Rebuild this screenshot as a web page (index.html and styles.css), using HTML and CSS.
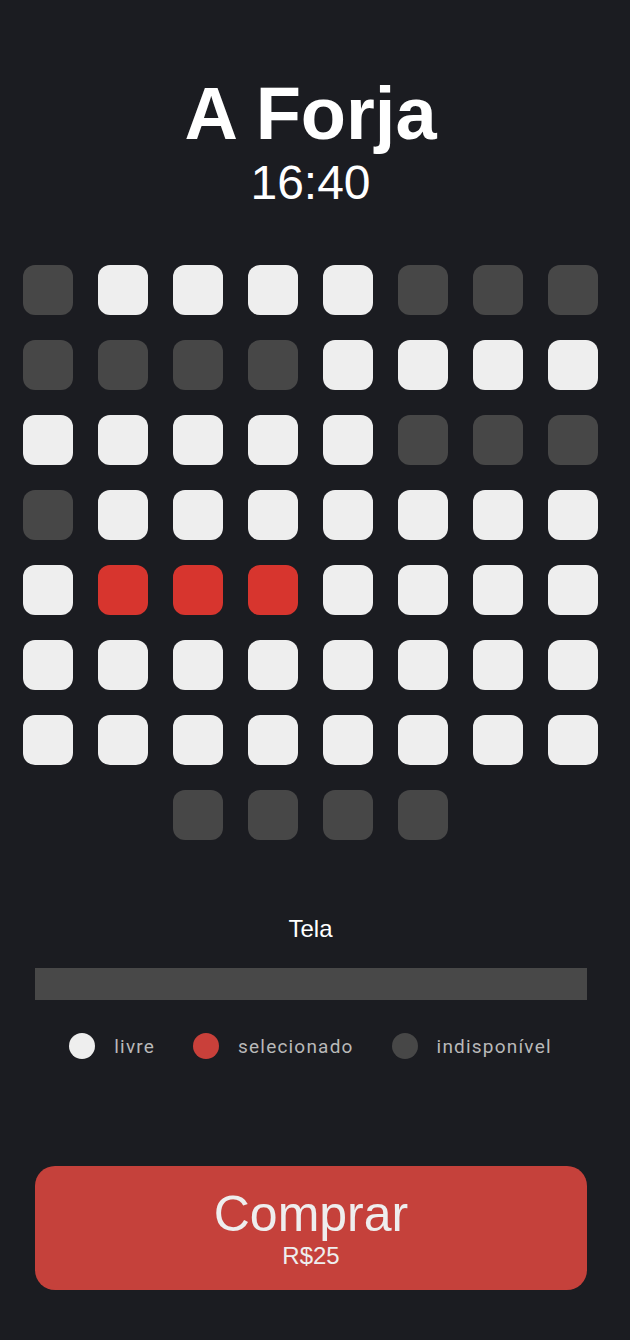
FILE: index.html
```html
<!DOCTYPE html>
<html lang="pt-BR">
  <head>
    <meta charset="UTF-8" />
    <meta name="viewport" content="width=device-width, initial-scale=1.0" />
    <title>A Forja - 16:40</title>
    <link rel="stylesheet" href="styles.css">
  </head>
  <body>
    <div class="app">
      <header class="session">
        <h1 class="movie-title">A Forja</h1>
        <div class="movie-time">16:40</div>
      </header>

      <div class="seats">
        <div class="seat taken"></div><div class="seat"></div><div class="seat"></div><div class="seat"></div>
        <div class="seat"></div><div class="seat taken"></div><div class="seat taken"></div><div class="seat taken"></div>

        <div class="seat taken"></div><div class="seat taken"></div><div class="seat taken"></div><div class="seat taken"></div>
        <div class="seat"></div><div class="seat"></div><div class="seat"></div><div class="seat"></div>

        <div class="seat"></div><div class="seat"></div><div class="seat"></div><div class="seat"></div>
        <div class="seat"></div><div class="seat taken"></div><div class="seat taken"></div><div class="seat taken"></div>

        <div class="seat taken"></div><div class="seat"></div><div class="seat"></div><div class="seat"></div>
        <div class="seat"></div><div class="seat"></div><div class="seat"></div><div class="seat"></div>

        <div class="seat"></div><div class="seat selected"></div><div class="seat selected"></div><div class="seat selected"></div>
        <div class="seat"></div><div class="seat"></div><div class="seat"></div><div class="seat"></div>

        <div class="seat"></div><div class="seat"></div><div class="seat"></div><div class="seat"></div>
        <div class="seat"></div><div class="seat"></div><div class="seat"></div><div class="seat"></div>

        <div class="seat"></div><div class="seat"></div><div class="seat"></div><div class="seat"></div>
        <div class="seat"></div><div class="seat"></div><div class="seat"></div><div class="seat"></div>

        <div class="seat taken first-back"></div><div class="seat taken"></div><div class="seat taken"></div><div class="seat taken"></div>
      </div>

      <div class="screen-label">Tela</div>
      <div class="screen"></div>

      <ul class="legend">
        <li><span class="dot"></span>livre</li>
        <li><span class="dot selected"></span>selecionado</li>
        <li><span class="dot taken"></span>indisponível</li>
      </ul>

      <button class="buy" type="button">
        <span class="buy-label">Comprar</span>
        <span class="buy-price">R$25</span>
      </button>
    </div>
  </body>
</html>
```

FILE: styles.css
```css
* { box-sizing: border-box; }
body {
  margin: 0;
  background: #1b1c21;
  font-family: 'Liberation Sans', Arial, sans-serif;
  color: #fff;
}
.app {
  width: 621px;
  padding-top: 77px;
}
.session {
  text-align: center;
}
.movie-title {
  margin: 0;
  font-size: 74px;
  line-height: 74px;
  font-weight: bold;
}
.movie-time {
  margin-top: 8px;
  font-size: 48px;
  line-height: 48px;
}
.seats {
  display: grid;
  grid-template-columns: repeat(8, 50px);
  grid-auto-rows: 50px;
  gap: 25px;
  justify-content: center;
  margin-top: 58px;
}
.seat {
  background: #eeeeee;
  border-radius: 12px;
}
.seat.taken { background: #474747; }
.seat.selected { background: #d7352e; }
.seat.first-back { grid-column-start: 3; }

.screen-label {
  margin-top: 77px;
  text-align: center;
  font-size: 24px;
  line-height: 24px;
}
.screen {
  height: 32px;
  margin: 27px 34px 0 35px;
  background: #484848;
}
.legend {
  list-style: none;
  margin: 33px 0 0;
  padding: 0;
  display: flex;
  justify-content: center;
  gap: 38px;
  font-family: Roboto, sans-serif;
  font-size: 19px;
  color: #b9b9b9;
  letter-spacing: 1.2px;
}
.legend li {
  display: flex;
  align-items: center;
  gap: 19px;
  height: 26px;
}
.dot {
  width: 26px;
  height: 26px;
  border-radius: 50%;
  background: #eeeeee;
}
.dot.selected { background: #c9403a; }
.dot.taken { background: #474747; }

.buy {
  display: flex;
  flex-direction: column;
  align-items: center;
  justify-content: center;
  width: 552px;
  height: 124px;
  margin: 107px 0 0 35px;
  border: none;
  border-radius: 20px;
  background: #c5413b;
  color: #eeeeee;
  font-family: 'Liberation Sans', Arial, sans-serif;
  cursor: pointer;
}
.buy-label {
  font-size: 50px;
  line-height: 50px;
}
.buy-price {
  margin-top: 5px;
  font-size: 24px;
  line-height: 24px;
}
```
